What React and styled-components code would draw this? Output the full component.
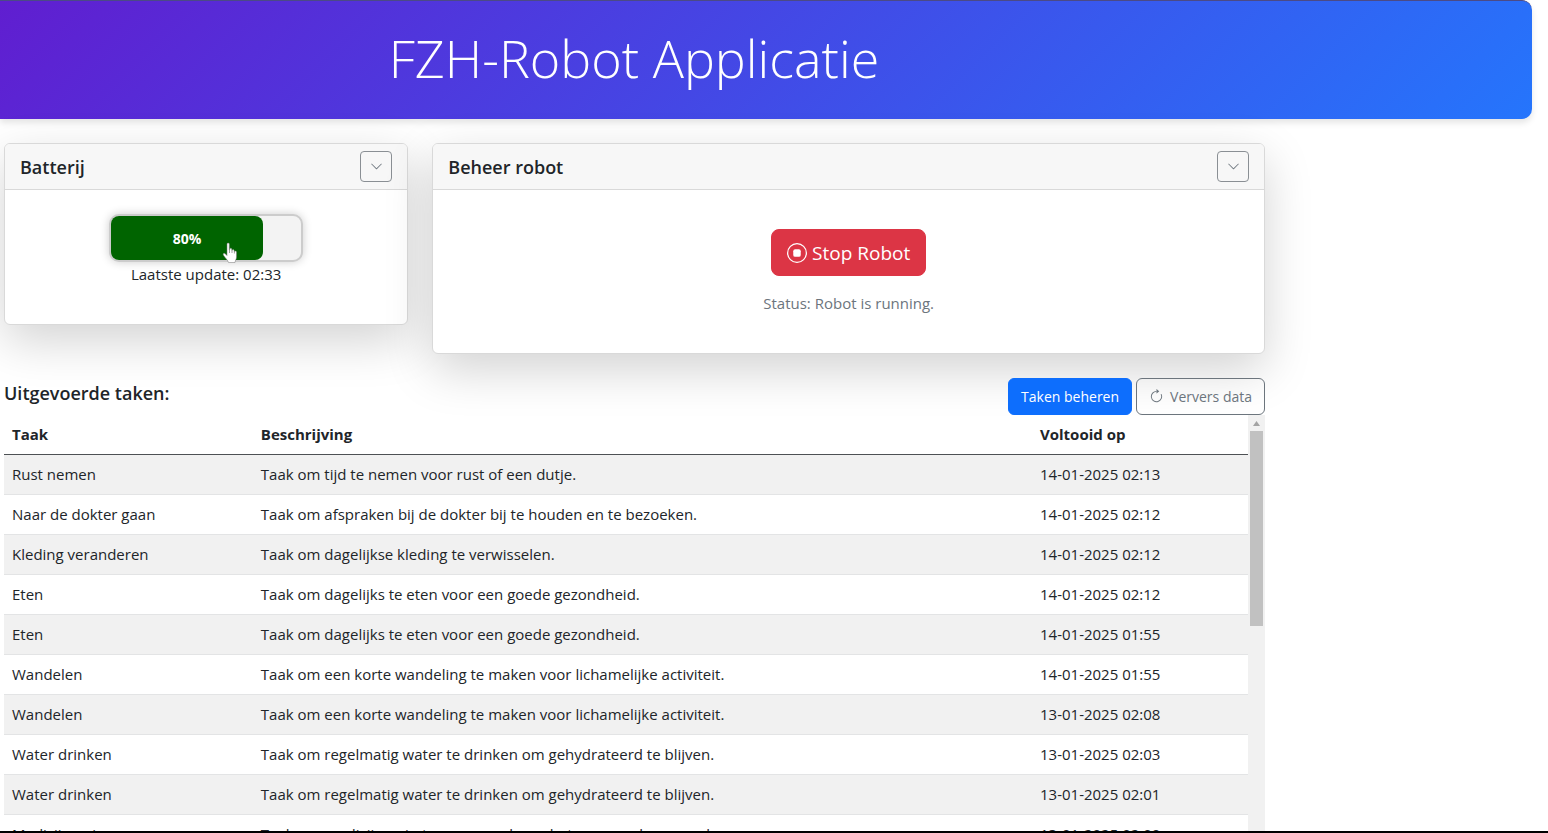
import React from "react";
import styled, { createGlobalStyle } from "styled-components";
import { BsChevronDown, BsStopCircle, BsArrowClockwise } from "react-icons/bs";

const GlobalStyle = createGlobalStyle`
  *, *::before, *::after { box-sizing: border-box; }
  body {
    margin: 0;
    background: #fff;
    color: #212529;
    font: 400 15px/23px "Open Sans", "Noto Sans", sans-serif;
  }
  button { font-family: inherit; cursor: pointer; }
  h1, h2, p { margin: 0; }
`;

const Page = styled.div`
  height: 100vh;
  display: flex;
  flex-direction: column;
  overflow: hidden;
  border-bottom: 2px solid #000;
`;

const Header = styled.header`
  flex: none;
  margin-right: 16px;
  padding: 22px 0 26px 4px;
  border-top: 1px solid #4b4a86;
  border-radius: 0 10px 10px 0;
  background: linear-gradient(135deg, #601ed0 0%, #2575fc 100%);
  box-shadow: 0 4px 6px rgba(0, 0, 0, 0.1);
`;

const Title = styled.h1`
  max-width: 1260px;
  color: #fff;
  font-size: 52px;
  font-weight: 300;
  line-height: 70px;
  text-align: center;
`;

const Content = styled.main`
  flex: 1;
  min-height: 0;
  display: flex;
  flex-direction: column;
  width: 100%;
  max-width: 1265px;
  padding: 24px 0 0 4px;
`;

const Cards = styled.section`
  flex: none;
  display: grid;
  grid-template-columns: 404fr 832fr;
  align-items: start;
  gap: 24px;
`;

const Card = styled.article`
  border: 1px solid #d9d9d9;
  border-radius: 6px;
  background: #fff;
  box-shadow: 0 16px 48px rgba(0, 0, 0, 0.175);
`;

const CardHeader = styled.header`
  display: flex;
  align-items: center;
  justify-content: space-between;
  padding: 7px 15px;
  border-bottom: 1px solid #d9d9d9;
  border-radius: 5px 5px 0 0;
  background: #f7f7f7;
`;

const Heading = styled.h2`
  font-size: 18px;
  font-weight: 600;
  line-height: 24px;
`;

const CollapseButton = styled.button`
  display: grid;
  place-items: center;
  width: 32px;
  height: 31px;
  padding: 0;
  border: 1px solid #8a8f94;
  border-radius: 4px;
  background: transparent;
  color: #6c757d;
`;

const CardBody = styled.div`
  display: flex;
  flex-direction: column;
  align-items: center;
  padding: ${(p) => (p.$spacious ? "39px 16px 38px" : "24px 16px 38px")};
`;

const Battery = styled.div`
  width: 194px;
  height: 48px;
  margin-bottom: 1px;
  border: 2px solid #ccc;
  border-radius: 10px;
  background: #f3f3f3;
  box-shadow: 0 0 10px rgba(0, 0, 0, 0.2);
`;

const Charge = styled.div`
  display: grid;
  place-items: center;
  position: relative;
  height: 100%;
  border-radius: 8px;
  background: #006400;
  color: #fff;
  font-size: 14px;
  font-weight: 700;
`;

const Pointer = styled.svg`
  position: absolute;
  right: 24px;
  bottom: -4px;
`;

const Status = styled.p`
  margin-top: 16px;
  color: #6c757d;
`;

const StopButton = styled.button`
  display: flex;
  align-items: center;
  gap: 5px;
  height: 47px;
  padding: 0 15px;
  border: 1px solid #dc3545;
  border-radius: 8px;
  background: #dc3545;
  color: #fff;
  font-size: 19px;
`;

const Toolbar = styled.div`
  flex: none;
  display: flex;
  align-items: flex-start;
  justify-content: space-between;
  margin-top: 24px;
`;

const ToolbarTitle = styled(Heading)`
  padding-top: 3px;
`;

const Actions = styled.div`
  display: flex;
  gap: 4px;
`;

const ActionButton = styled.button`
  display: flex;
  align-items: center;
  gap: 6px;
  height: 37px;
  padding: 0 12px;
  border: 1px solid ${(p) => (p.$primary ? "#0d6efd" : "#6c757d")};
  border-radius: 6px;
  background: ${(p) => (p.$primary ? "#0d6efd" : "transparent")};
  color: ${(p) => (p.$primary ? "#fff" : "#6c757d")};
  font-size: 14px;
`;

const TableArea = styled.div`
  flex: 1;
  min-height: 0;
  display: flex;
  overflow: hidden;
`;

const Table = styled.table`
  flex: 1;
  height: max-content;
  border-collapse: collapse;
  table-layout: fixed;

  th, td {
    height: 40px;
    padding: 0 8px;
    text-align: left;
    white-space: nowrap;
  }
  th { height: 39px; font-weight: 700; }
  td { border-bottom: 1px solid #e3e4e5; }
  thead tr { border-bottom: 1px solid #4d5154; }
  tbody tr:nth-child(odd) { background: #f1f1f1; }
`;

const Col = styled.col`
  width: ${(p) => p.$width};
`;

const ScrollTrack = styled.div`
  flex: none;
  display: flex;
  flex-direction: column;
  align-items: center;
  width: 17px;
  background: #f1f1f1;
`;

const ScrollArrow = styled.svg`
  flex: none;
  margin: 6px 0 5px;
`;

const ScrollThumb = styled.div`
  width: 13px;
  height: 195px;
  background: #c1c1c1;
`;

const tasks = [
  ["Rust nemen", "Taak om tijd te nemen voor rust of een dutje.", "14-01-2025 02:13"],
  ["Naar de dokter gaan", "Taak om afspraken bij de dokter bij te houden en te bezoeken.", "14-01-2025 02:12"],
  ["Kleding veranderen", "Taak om dagelijkse kleding te verwisselen.", "14-01-2025 02:12"],
  ["Eten", "Taak om dagelijks te eten voor een goede gezondheid.", "14-01-2025 02:12"],
  ["Eten", "Taak om dagelijks te eten voor een goede gezondheid.", "14-01-2025 01:55"],
  ["Wandelen", "Taak om een korte wandeling te maken voor lichamelijke activiteit.", "14-01-2025 01:55"],
  ["Wandelen", "Taak om een korte wandeling te maken voor lichamelijke activiteit.", "13-01-2025 02:08"],
  ["Water drinken", "Taak om regelmatig water te drinken om gehydrateerd te blijven.", "13-01-2025 02:03"],
  ["Water drinken", "Taak om regelmatig water te drinken om gehydrateerd te blijven.", "13-01-2025 02:01"],
  ["Medicijnen innemen", "Taak om medicijnen in te nemen volgens het voorgeschreven schema.", "13-01-2025 02:00"],
];

function BatteryCard({ level, updated }) {
  return (
    <Card>
      <CardHeader>
        <Heading>Batterij</Heading>
        <CollapseButton type="button" aria-label="Batterij inklappen">
          <BsChevronDown size={13} />
        </CollapseButton>
      </CardHeader>
      <CardBody>
        <Battery>
          <Charge style={{ width: `${level}%` }}>
            {level}%
            <Pointer width="17" height="22" viewBox="0 0 17 22" aria-hidden="true">
              <path
                d="M5 2c0-1.300 2.300-1.300 2.300 0v6l.4-.1V6.800c.3-1 2-.8 2.100.2v1.300h.4c.2-1 1.900-.9 2 .2v1h.4c.3-.9 1.900-.6 1.900.6v5c0 2.400-1.300 3-1.500 5.400H6.500C6 18.300 3.600 16.500 1.500 13.300c-1-1.600.7-2.700 2-1.300L5 13.500z"
                fill="#fff"
                stroke="#777"
                strokeWidth=".5"
              />
              <path d="M7.500 8v3M10 8.300V11M12.400 9.500V11.500" stroke="#777" strokeWidth=".7" />
            </Pointer>
          </Charge>
        </Battery>
        <p>Laatste update: {updated}</p>
      </CardBody>
    </Card>
  );
}

function RobotCard() {
  return (
    <Card>
      <CardHeader>
        <Heading>Beheer robot</Heading>
        <CollapseButton type="button" aria-label="Beheer robot inklappen">
          <BsChevronDown size={13} />
        </CollapseButton>
      </CardHeader>
      <CardBody $spacious>
        <StopButton type="button">
          <BsStopCircle size={20} />
          Stop Robot
        </StopButton>
        <Status>Status: Robot is running.</Status>
      </CardBody>
    </Card>
  );
}

function TaskTable() {
  return (
    <TableArea>
      <Table>
        <colgroup>
          <Col $width="20%" />
          <Col />
          <Col $width="216px" />
        </colgroup>
        <thead>
          <tr>
            <th scope="col">Taak</th>
            <th scope="col">Beschrijving</th>
            <th scope="col">Voltooid op</th>
          </tr>
        </thead>
        <tbody>
          {tasks.map(([name, description, completed], i) => (
            <tr key={i}>
              <td>{name}</td>
              <td>{description}</td>
              <td>{completed}</td>
            </tr>
          ))}
        </tbody>
      </Table>
      <ScrollTrack aria-hidden="true">
        <ScrollArrow width="7" height="5" viewBox="0 0 7 5">
          <path d="M0 5 3.500 0 7 5z" fill="#a3a3a3" />
        </ScrollArrow>
        <ScrollThumb />
      </ScrollTrack>
    </TableArea>
  );
}

export default function App() {
  return (
    <Page>
      <GlobalStyle />
      <Header>
        <Title>FZH-Robot Applicatie</Title>
      </Header>
      <Content>
        <Cards>
          <BatteryCard level={80} updated="02:33" />
          <RobotCard />
        </Cards>
        <Toolbar>
          <ToolbarTitle>Uitgevoerde taken:</ToolbarTitle>
          <Actions>
            <ActionButton type="button" $primary>Taken beheren</ActionButton>
            <ActionButton type="button">
              <BsArrowClockwise size={15} />
              Ververs data
            </ActionButton>
          </Actions>
        </Toolbar>
        <TaskTable />
      </Content>
    </Page>
  );
}
